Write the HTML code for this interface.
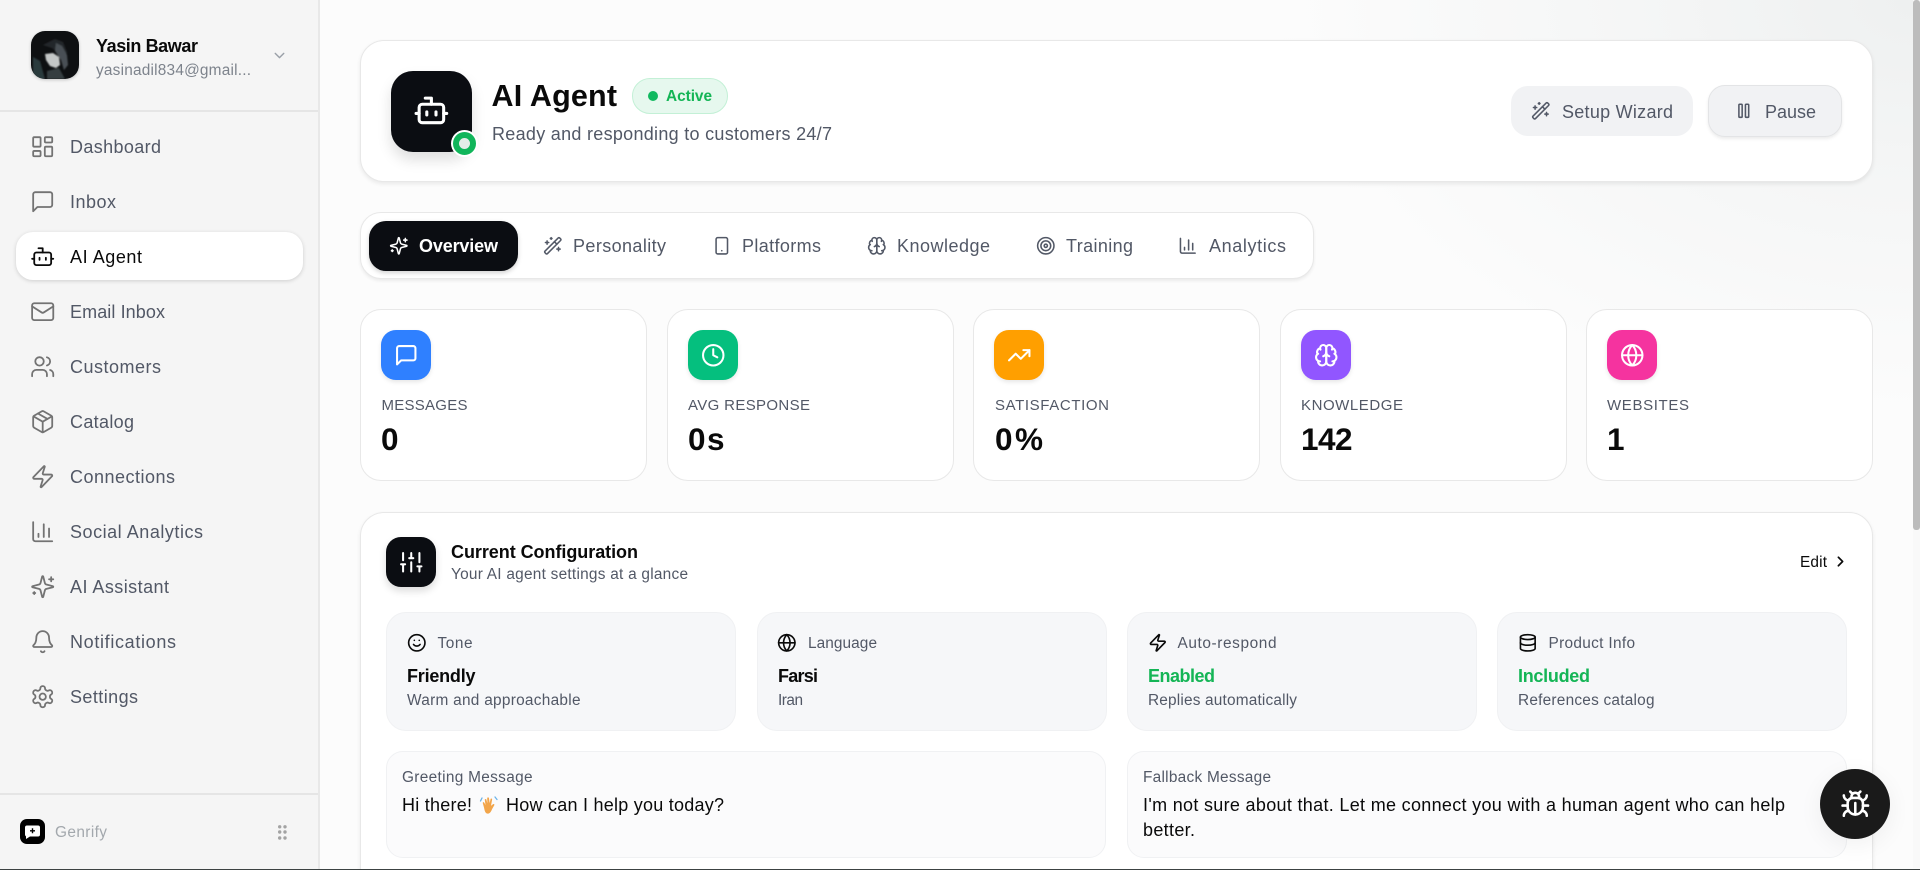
<!DOCTYPE html>
<html lang="en"><head><meta charset="utf-8"><title>AI Agent</title>
<style>
*{box-sizing:border-box;margin:0;padding:0}
html,body{width:1920px;height:870px;overflow:hidden;background:#fcfcfc}
body{position:relative;font-family:"Liberation Sans",sans-serif}
.a{position:absolute}
.bg{left:320px;top:0;width:1600px;height:870px;background:radial-gradient(ellipse 640px 420px at 100% 0,#eef0f0 0,#f5f6f6 45%,#fcfcfc 100%)}
.side{left:0;top:0;width:320px;height:870px;background:#f5f5f5;border-right:2px solid #e8e8e8}
.hr{left:0;width:318px;height:1.5px;background:#e5e5e5}
.card{background:#fff;border:1.5px solid #e8e8e8}
.stat{top:309px;width:286.5px;height:172px;border-radius:21px}
.ico{width:50px;height:50px;top:330px;border-radius:15px;box-shadow:0 2px 4px rgba(0,0,0,.1)}
.sub{top:612px;height:119px;width:350px;border-radius:20px;background:#f6f7f9;border:1.5px solid #f0f1f3}
.msg{top:751px;height:107px;width:720px;border-radius:17px;background:#fbfbfc;border:1.5px solid #f0f1f3}
svg.i{position:absolute;fill:none;stroke:currentColor;stroke-linecap:round;stroke-linejoin:round;overflow:visible}
svg.n{width:25.4px;height:25.4px;left:29.8px;color:#737373;stroke-width:1.7}
svg.t{width:19.6px;height:19.6px;color:#525866;stroke-width:1.9}
svg.w{width:24.5px;height:24.5px;color:#fff;stroke-width:2}
svg.c{width:19.6px;height:19.6px;top:633.2px;color:#0a0a0a;stroke-width:2}
#txt{left:0;top:0;width:1920px;height:870px}
#txt text{font-family:"Liberation Sans",sans-serif;fill:#525866;font-size:18px}
#txt .k{fill:#0a0a0a}
#txt .b{font-weight:700}
#txt .s{font-size:15.4px}
#txt .u{font-size:15px}
#txt .v{font-size:31.5px;font-weight:700;fill:#0a0a0a}
#txt .g{fill:#14b556}
</style></head><body>
<svg width="0" height="0" style="position:absolute"><defs>
<symbol id="dash" viewBox="0 0 24 24"><rect x="3" y="3" width="7" height="9" rx="1"/><rect x="14" y="3" width="7" height="5" rx="1"/><rect x="14" y="12" width="7" height="9" rx="1"/><rect x="3" y="16" width="7" height="5" rx="1"/></symbol>
<symbol id="msg" viewBox="0 0 24 24"><path d="M21 15a2 2 0 0 1-2 2H7l-4 4V5a2 2 0 0 1 2-2h14a2 2 0 0 1 2 2z"/></symbol>
<symbol id="bot" viewBox="0 0 24 24"><path d="M12 8V4H8"/><rect width="16" height="12" x="4" y="8" rx="2"/><path d="M2 14h2M20 14h2M15 13v2M9 13v2"/></symbol>
<symbol id="mail" viewBox="0 0 24 24"><rect width="20" height="16" x="2" y="4" rx="2"/><path d="m22 7-8.97 5.7a1.94 1.94 0 0 1-2.06 0L2 7"/></symbol>
<symbol id="users" viewBox="0 0 24 24"><path d="M16 21v-2a4 4 0 0 0-4-4H6a4 4 0 0 0-4 4v2"/><circle cx="9" cy="7" r="4"/><path d="M22 21v-2a4 4 0 0 0-3-3.87"/><path d="M16 3.13a4 4 0 0 1 0 7.75"/></symbol>
<symbol id="pkg" viewBox="0 0 24 24"><path d="M11 21.73a2 2 0 0 0 2 0l7-4A2 2 0 0 0 21 16V8a2 2 0 0 0-1-1.73l-7-4a2 2 0 0 0-2 0l-7 4A2 2 0 0 0 3 8v8a2 2 0 0 0 1 1.73z"/><path d="M12 22V12"/><path d="M3.29 7 12 12l8.71-5"/><path d="m7.5 4.27 9 5.15"/></symbol>
<symbol id="zap" viewBox="0 0 24 24"><path d="M4 14a1 1 0 0 1-.78-1.63l9.9-10.2a.5.5 0 0 1 .86.46l-1.92 6.02A1 1 0 0 0 13 10h7a1 1 0 0 1 .78 1.63l-9.9 10.2a.5.5 0 0 1-.86-.46l1.92-6.02A1 1 0 0 0 11 14z"/></symbol>
<symbol id="chart" viewBox="0 0 24 24"><path d="M3 3v16a2 2 0 0 0 2 2h16"/><path d="M18 17V9"/><path d="M13 17V5"/><path d="M8 17v-3"/></symbol>
<symbol id="spark" viewBox="0 0 24 24"><path d="M9.937 15.5A2 2 0 0 0 8.5 14.063l-6.135-1.582a.5.5 0 0 1 0-.962L8.5 9.936A2 2 0 0 0 9.937 8.5l1.582-6.135a.5.5 0 0 1 .963 0L14.063 8.5A2 2 0 0 0 15.5 9.937l6.135 1.581a.5.5 0 0 1 0 .964L15.5 14.063a2 2 0 0 0-1.437 1.437l-1.582 6.135a.5.5 0 0 1-.963 0z"/><path d="M20 3v4M22 5h-4M4 17v2M5 18H3"/></symbol>
<symbol id="bell" viewBox="0 0 24 24"><path d="M10.268 21a2 2 0 0 0 3.464 0"/><path d="M3.262 15.326A1 1 0 0 0 4 17h16a1 1 0 0 0 .74-1.673C19.41 13.956 18 12.499 18 8A6 6 0 0 0 6 8c0 4.499-1.411 5.956-2.738 7.326"/></symbol>
<symbol id="gear" viewBox="0 0 24 24"><path d="M12.22 2h-.44a2 2 0 0 0-2 2v.18a2 2 0 0 1-1 1.73l-.43.25a2 2 0 0 1-2 0l-.15-.08a2 2 0 0 0-2.73.73l-.22.38a2 2 0 0 0 .73 2.73l.15.1a2 2 0 0 1 1 1.72v.51a2 2 0 0 1-1 1.74l-.15.09a2 2 0 0 0-.73 2.73l.22.38a2 2 0 0 0 2.73.73l.15-.08a2 2 0 0 1 2 0l.43.25a2 2 0 0 1 1 1.73V20a2 2 0 0 0 2 2h.44a2 2 0 0 0 2-2v-.18a2 2 0 0 1 1-1.73l.43-.25a2 2 0 0 1 2 0l.15.08a2 2 0 0 0 2.73-.73l.22-.39a2 2 0 0 0-.73-2.73l-.15-.08a2 2 0 0 1-1-1.74v-.5a2 2 0 0 1 1-1.74l.15-.09a2 2 0 0 0 .73-2.73l-.22-.38a2 2 0 0 0-2.73-.73l-.15.08a2 2 0 0 1-2 0l-.43-.25a2 2 0 0 1-1-1.73V4a2 2 0 0 0-2-2z"/><circle cx="12" cy="12" r="3"/></symbol>
<symbol id="wand" viewBox="0 0 24 24"><path d="m21.64 3.64-1.28-1.28a1.21 1.21 0 0 0-1.72 0L2.36 18.64a1.21 1.21 0 0 0 0 1.72l1.28 1.28a1.2 1.2 0 0 0 1.72 0L21.64 5.36a1.2 1.2 0 0 0 0-1.72"/><path d="m14 7 3 3M5 6v4M19 14v4M10 2v2M7 8H3M21 16h-4M11 3H9"/></symbol>
<symbol id="pause" viewBox="0 0 24 24"><rect x="14" y="4" width="4" height="16" rx="1"/><rect x="6" y="4" width="4" height="16" rx="1"/></symbol>
<symbol id="phone" viewBox="0 0 24 24"><rect width="14" height="20" x="5" y="2" rx="2"/><path d="M12 18h.01"/></symbol>
<symbol id="brain" viewBox="0 0 24 24"><path d="M12 5a3 3 0 1 0-5.997.125 4 4 0 0 0-2.526 5.77 4 4 0 0 0 .556 6.588A4 4 0 1 0 12 18Z"/><path d="M12 5a3 3 0 1 1 5.997.125 4 4 0 0 1 2.526 5.77 4 4 0 0 1-.556 6.588A4 4 0 1 1 12 18Z"/><path d="M15 13a4.5 4.5 0 0 1-3-4 4.5 4.5 0 0 1-3 4"/><path d="M17.599 6.5a3 3 0 0 0 .399-1.375M6.003 5.125A3 3 0 0 0 6.401 6.5M3.477 10.896a4 4 0 0 1 .585-.396M19.938 10.5a4 4 0 0 1 .585.396M6 18a4 4 0 0 1-1.967-.516M19.967 17.484A4 4 0 0 1 18 18"/></symbol>
<symbol id="target" viewBox="0 0 24 24"><circle cx="12" cy="12" r="10"/><circle cx="12" cy="12" r="6"/><circle cx="12" cy="12" r="2"/></symbol>
<symbol id="clock" viewBox="0 0 24 24"><circle cx="12" cy="12" r="10"/><path d="M12 6v6l4 2"/></symbol>
<symbol id="trend" viewBox="0 0 24 24"><path d="M22 7l-8.5 8.5-5-5L2 17"/><path d="M16 7h6v6"/></symbol>
<symbol id="globe" viewBox="0 0 24 24"><circle cx="12" cy="12" r="10"/><path d="M12 2a14.5 14.5 0 0 0 0 20 14.5 14.5 0 0 0 0-20"/><path d="M2 12h20"/></symbol>
<symbol id="sliders" viewBox="0 0 24 24"><path d="M4 21v-7M4 10V3M12 21v-9M12 8V3M20 21v-5M20 12V3M2 14h4M10 8h4M18 16h4"/></symbol>
<symbol id="smile" viewBox="0 0 24 24"><circle cx="12" cy="12" r="10"/><path d="M8 14s1.5 2 4 2 4-2 4-2M9 9h.01M15 9h.01"/></symbol>
<symbol id="db" viewBox="0 0 24 24"><ellipse cx="12" cy="5" rx="9" ry="3"/><path d="M3 5V19A9 3 0 0 0 21 19V5"/><path d="M3 12A9 3 0 0 0 21 12"/></symbol>
<symbol id="bug" viewBox="0 0 24 24"><path d="m8 2 1.88 1.88M14.12 3.88 16 2M9 7.13v-1a3.003 3.003 0 1 1 6 0v1"/><path d="M12 20c-3.3 0-6-2.7-6-6v-3a4 4 0 0 1 4-4h4a4 4 0 0 1 4 4v3c0 3.3-2.7 6-6 6"/><path d="M12 20v-9M6.53 9C4.6 8.8 3 7.1 3 5M6 13H2M3 21c0-2.1 1.7-3.9 3.8-4M20.97 5c0 2.1-1.6 3.8-3.5 4M22 13h-4M17.2 17c2.1.1 3.8 1.9 3.8 4"/></symbol>
<filter id="soft"><feGaussianBlur stdDeviation=".9"/></filter>
</defs></svg>

<div class="a bg"></div>

<!-- sidebar -->
<div class="a side"></div>
<svg class="a" style="left:31px;top:31px;border-radius:14px;box-shadow:0 1px 3px rgba(0,0,0,.2)" width="48" height="48" viewBox="0 0 48 48">
<rect width="48" height="48" fill="#0e1012"/>
<g filter="url(#soft)">
<path d="M12 14l12-6 8 3 4 10-2 8-5-6-8-6z" fill="#23282b"/>
<path d="M25 12l6 3 5 9 1 10-4 5-3-10-6-9z" fill="#4a5054"/>
<path d="M14 23l8-1 6 4 1 8-4 3-6-2-4-6z" fill="#c4c7c7"/>
<path d="M2 26l7 4 5 18H2z" fill="#2c3a3d"/>
<path d="M16 40l12-3 6 11H16z" fill="#343c3f"/>
</g>
</svg>
<svg class="i" style="left:271px;top:47px;width:17px;height:17px;color:#9aa0a8;stroke-width:2" viewBox="0 0 24 24"><path d="m6 9 6 6 6-6"/></svg>
<div class="a hr" style="top:110px"></div>
<div class="a" style="left:16px;top:232px;width:287px;height:48px;border-radius:17px;background:#fff;box-shadow:0 1px 4px rgba(0,0,0,.16)"></div>

<svg class="i n" style="top:134px"><use href="#dash"/></svg>
<svg class="i n" style="top:189px"><use href="#msg"/></svg>
<svg class="i n" style="top:244px;color:#0a0a0a"><use href="#bot"/></svg>
<svg class="i n" style="top:299px"><use href="#mail"/></svg>
<svg class="i n" style="top:354px"><use href="#users"/></svg>
<svg class="i n" style="top:409px"><use href="#pkg"/></svg>
<svg class="i n" style="top:464px"><use href="#zap"/></svg>
<svg class="i n" style="top:519px"><use href="#chart"/></svg>
<svg class="i n" style="top:574px"><use href="#spark"/></svg>
<svg class="i n" style="top:629px"><use href="#bell"/></svg>
<svg class="i n" style="top:684px"><use href="#gear"/></svg>

<div class="a hr" style="top:793px"></div>
<svg class="a" style="left:20px;top:819px" width="25" height="25" viewBox="0 0 25 25"><rect width="25" height="25" rx="7" fill="#000"/><path d="M7 6.5h11a2 2 0 0 1 2 2v7a2 2 0 0 1-2 2h-8l-4 2.5v-2.6a2 2 0 0 1-1-1.9v-7a2 2 0 0 1 2-2z" fill="#fff"/><path d="M12.5 9.3v5M10 11.8h5" stroke="#000" stroke-width="1.4"/></svg>
<svg class="a" style="left:276px;top:822px" width="12" height="20" fill="#a3a3a3"><circle cx="3.7" cy="4.8" r="1.7"/><circle cx="9" cy="4.8" r="1.7"/><circle cx="3.7" cy="10" r="1.7"/><circle cx="9" cy="10" r="1.7"/><circle cx="3.7" cy="16" r="1.7"/><circle cx="9" cy="16" r="1.7"/></svg>

<!-- header card -->
<div class="a card" style="left:360px;top:40px;width:1513px;height:142px;border-radius:24px;box-shadow:0 2px 4px rgba(0,0,0,.08)"></div>
<div class="a" style="left:391px;top:70.5px;width:81px;height:81px;border-radius:22px;background:#0b0d12;box-shadow:0 8px 14px rgba(0,0,0,.13)"></div>
<svg class="i" style="left:412.6px;top:92.4px;width:36.8px;height:36.8px;color:#fff;stroke-width:2"><use href="#bot"/></svg>
<div class="a" style="left:452.5px;top:131.5px;width:23px;height:23px;border-radius:50%;background:#e4ece8;border:6px solid #10b55a;box-shadow:0 0 0 2px #fff"></div>
<div class="a" style="left:632px;top:78px;width:96px;height:35.5px;border-radius:18px;background:#e6f8ee;border:1.5px solid #c3f0d6"></div>
<div class="a" style="left:648px;top:91px;width:10px;height:10px;border-radius:50%;background:#10b95f"></div>
<div class="a" style="left:1511px;top:86px;width:182px;height:50px;border-radius:17px;background:#f1f2f4"></div>
<div class="a" style="left:1708px;top:85px;width:134px;height:52px;border-radius:17px;background:#f1f2f4;border:1.5px solid #e3e4e6;box-shadow:0 2px 3px rgba(0,0,0,.08)"></div>
<svg class="i t" style="left:1531.2px;top:101.2px"><use href="#wand"/></svg>
<svg class="i t" style="left:1734.2px;top:101.2px"><use href="#pause"/></svg>

<!-- tabs -->
<div class="a card" style="left:360px;top:212px;width:954px;height:67px;border-radius:21px;box-shadow:0 2px 3px rgba(0,0,0,.07)"></div>
<div class="a" style="left:369px;top:221px;width:149px;height:50px;border-radius:17px;background:#0b0d12;box-shadow:0 2px 5px rgba(0,0,0,.18)"></div>
<svg class="i t" style="left:389.2px;top:236.2px;color:#fff"><use href="#spark"/></svg>
<svg class="i t" style="left:542.9px;top:236.2px"><use href="#wand"/></svg>
<svg class="i t" style="left:712.2px;top:236.2px"><use href="#phone"/></svg>
<svg class="i t" style="left:866.9px;top:236.2px"><use href="#brain"/></svg>
<svg class="i t" style="left:1036.2px;top:236.2px"><use href="#target"/></svg>
<svg class="i t" style="left:1177.9px;top:236.2px"><use href="#chart"/></svg>

<!-- stats -->
<div class="a card stat" style="left:360px"></div>
<div class="a card stat" style="left:667px"></div>
<div class="a card stat" style="left:973px"></div>
<div class="a card stat" style="left:1280px"></div>
<div class="a card stat" style="left:1586px"></div>
<div class="a ico" style="left:381px;background:#2f80ff"></div>
<div class="a ico" style="left:688px;background:#05bf7e"></div>
<div class="a ico" style="left:994px;background:#ff9f00"></div>
<div class="a ico" style="left:1301px;background:#9156ff"></div>
<div class="a ico" style="left:1607px;background:#f5339f"></div>
<svg class="i w" style="left:393.8px;top:342.8px"><use href="#msg"/></svg>
<svg class="i w" style="left:700.8px;top:342.8px"><use href="#clock"/></svg>
<svg class="i w" style="left:1006.8px;top:342.8px"><use href="#trend"/></svg>
<svg class="i w" style="left:1313.8px;top:342.8px"><use href="#brain"/></svg>
<svg class="i w" style="left:1619.8px;top:342.8px"><use href="#globe"/></svg>

<!-- config -->
<div class="a card" style="left:360px;top:511.5px;width:1513px;height:400px;border-radius:24px;box-shadow:0 2px 4px rgba(0,0,0,.07)"></div>
<div class="a" style="left:386px;top:537px;width:50px;height:50px;border-radius:15px;background:#0b0d12;box-shadow:0 4px 8px rgba(0,0,0,.14)"></div>
<svg class="i w" style="left:398.8px;top:549.8px"><use href="#sliders"/></svg>
<svg class="i" style="left:1831.5px;top:552.5px;width:17px;height:17px;color:#0a0a0a;stroke-width:2.4" viewBox="0 0 24 24"><path d="m9 18 6-6-6-6"/></svg>
<div class="a sub" style="left:386px"></div>
<div class="a sub" style="left:756.5px"></div>
<div class="a sub" style="left:1127px"></div>
<div class="a sub" style="left:1497px"></div>
<svg class="i c" style="left:407.2px"><use href="#smile"/></svg>
<svg class="i c" style="left:777.2px"><use href="#globe"/></svg>
<svg class="i c" style="left:1148.2px"><use href="#zap"/></svg>
<svg class="i c" style="left:1518.2px"><use href="#db"/></svg>
<div class="a msg" style="left:386px"></div>
<div class="a msg" style="left:1127px"></div>
<svg class="a" style="left:479px;top:795px" width="20" height="20" viewBox="0 0 20 20"><path d="M5 12.500 3.800 8.200c-.3-1 1-1.500 1.500-.5l1.200 2.300L5.800 5c-.2-1.100 1.300-1.400 1.600-.3l1 3.600-.2-5c0-1.200 1.600-1.300 1.800-.1l.7 4.900.8-3.900c.3-1.100 1.800-.8 1.600.4L12 10.800l2-1.600c.9-.7 1.900.3 1.200 1.200l-2.200 3.800c-1 2.800-2.600 4.600-4.600 4.400-2.100-.2-2.800-3-3.400-6.100z" fill="#f2a54a"/><path d="M1.500 6l1.500-3M16 2l2 2.500" stroke="#6bb3e8" stroke-width="1.300" fill="none" stroke-linecap="round"/></svg>

<!-- text layer -->
<svg id="txt" class="a" viewBox="0 0 1920 870">
<text class="k b" x="96" y="52" textLength="102">Yasin Bawar</text>
<text class="s" x="96" y="75" textLength="155" style="fill:#7d838c">yasinadil834@gmail...</text>
<text x="70" y="153" textLength="91">Dashboard</text>
<text x="70" y="208" textLength="46">Inbox</text>
<text class="k" x="70" y="263" textLength="72">AI Agent</text>
<text x="70" y="318" textLength="95">Email Inbox</text>
<text x="70" y="373" textLength="91">Customers</text>
<text x="70" y="428" textLength="64">Catalog</text>
<text x="70" y="483" textLength="105">Connections</text>
<text x="70" y="538" textLength="133">Social Analytics</text>
<text x="70" y="593" textLength="99">AI Assistant</text>
<text x="70" y="648" textLength="106">Notifications</text>
<text x="70" y="703" textLength="68">Settings</text>
<text class="s" x="55" y="837" textLength="52" style="fill:#a3a8ad">Genrify</text>

<text class="v" x="491.5" y="106" textLength="125.5" style="font-size:30.5px">AI Agent</text>
<text class="s g b" x="666" y="101" textLength="46">Active</text>
<text x="492" y="140" textLength="340">Ready and responding to customers 24/7</text>
<text x="1562" y="118" textLength="111">Setup Wizard</text>
<text x="1765" y="118" textLength="51">Pause</text>

<text class="b" x="419" y="252" textLength="79" style="fill:#fff">Overview</text>
<text x="573" y="252" textLength="93">Personality</text>
<text x="742" y="252" textLength="79">Platforms</text>
<text x="897" y="252" textLength="93">Knowledge</text>
<text x="1066" y="252" textLength="67">Training</text>
<text x="1209" y="252" textLength="77">Analytics</text>

<text class="u" x="381.5" y="410" textLength="86">MESSAGES</text>
<text class="u" x="688" y="410" textLength="122">AVG RESPONSE</text>
<text class="u" x="995" y="410" textLength="114">SATISFACTION</text>
<text class="u" x="1301" y="410" textLength="102">KNOWLEDGE</text>
<text class="u" x="1607" y="410" textLength="82">WEBSITES</text>
<text class="v" x="381" y="450" textLength="20">0</text>
<text class="v" x="688" y="450" textLength="36.5">0s</text>
<text class="v" x="995" y="450" textLength="48">0%</text>
<text class="v" x="1301" y="450" textLength="51.5">142</text>
<text class="v" x="1607" y="450">1</text>

<text class="k b" x="451" y="558" textLength="187">Current Configuration</text>
<text class="s" x="451" y="579" textLength="237">Your AI agent settings at a glance</text>
<text class="s k" x="1800" y="567" textLength="27">Edit</text>

<text class="s" x="437.5" y="648" textLength="35">Tone</text>
<text class="s" x="808" y="648" textLength="69">Language</text>
<text class="s" x="1177.5" y="648" textLength="99">Auto-respond</text>
<text class="s" x="1548.5" y="648" textLength="86.5">Product Info</text>
<text class="k b" x="407" y="682" textLength="68.5">Friendly</text>
<text class="k b" x="778" y="682" textLength="40">Farsi</text>
<text class="g b" x="1148" y="682" textLength="67">Enabled</text>
<text class="g b" x="1518" y="682" textLength="72">Included</text>
<text class="s" x="407" y="705" textLength="173.5">Warm and approachable</text>
<text class="s" x="778" y="705" textLength="25">Iran</text>
<text class="s" x="1148" y="705" textLength="149">Replies automatically</text>
<text class="s" x="1518" y="705" textLength="136.5">References catalog</text>

<text class="s" x="402" y="782" textLength="130.5">Greeting Message</text>
<text class="k" x="402" y="811" textLength="70">Hi there!</text>
<text class="k" x="506" y="811" textLength="218">How can I help you today?</text>
<text class="s" x="1143" y="782" textLength="128">Fallback Message</text>
<text class="k" x="1143" y="811" textLength="642">I'm not sure about that. Let me connect you with a human agent who can help</text>
<text class="k" x="1143" y="836" textLength="52">better.</text>
</svg>

<!-- FAB -->
<div class="a" style="left:1820px;top:769px;width:70px;height:70px;border-radius:50%;background:#1a1a1a;box-shadow:0 6px 24px rgba(0,0,0,.06)"></div>
<svg class="i" style="left:1839.7px;top:788.7px;width:30.6px;height:30.6px;color:#fff;stroke-width:2"><use href="#bug"/></svg>

<!-- scrollbar and bottom line -->
<div class="a" style="left:1913px;top:0;width:7px;height:868px;background:#f9f9f9"></div>
<div class="a" style="left:1913px;top:0;width:7px;height:530px;background:#bcbcbc;border-radius:3px"></div>
<div class="a" style="left:0;top:868.5px;width:1920px;height:1.5px;background:#3c4242"></div>
</body></html>
